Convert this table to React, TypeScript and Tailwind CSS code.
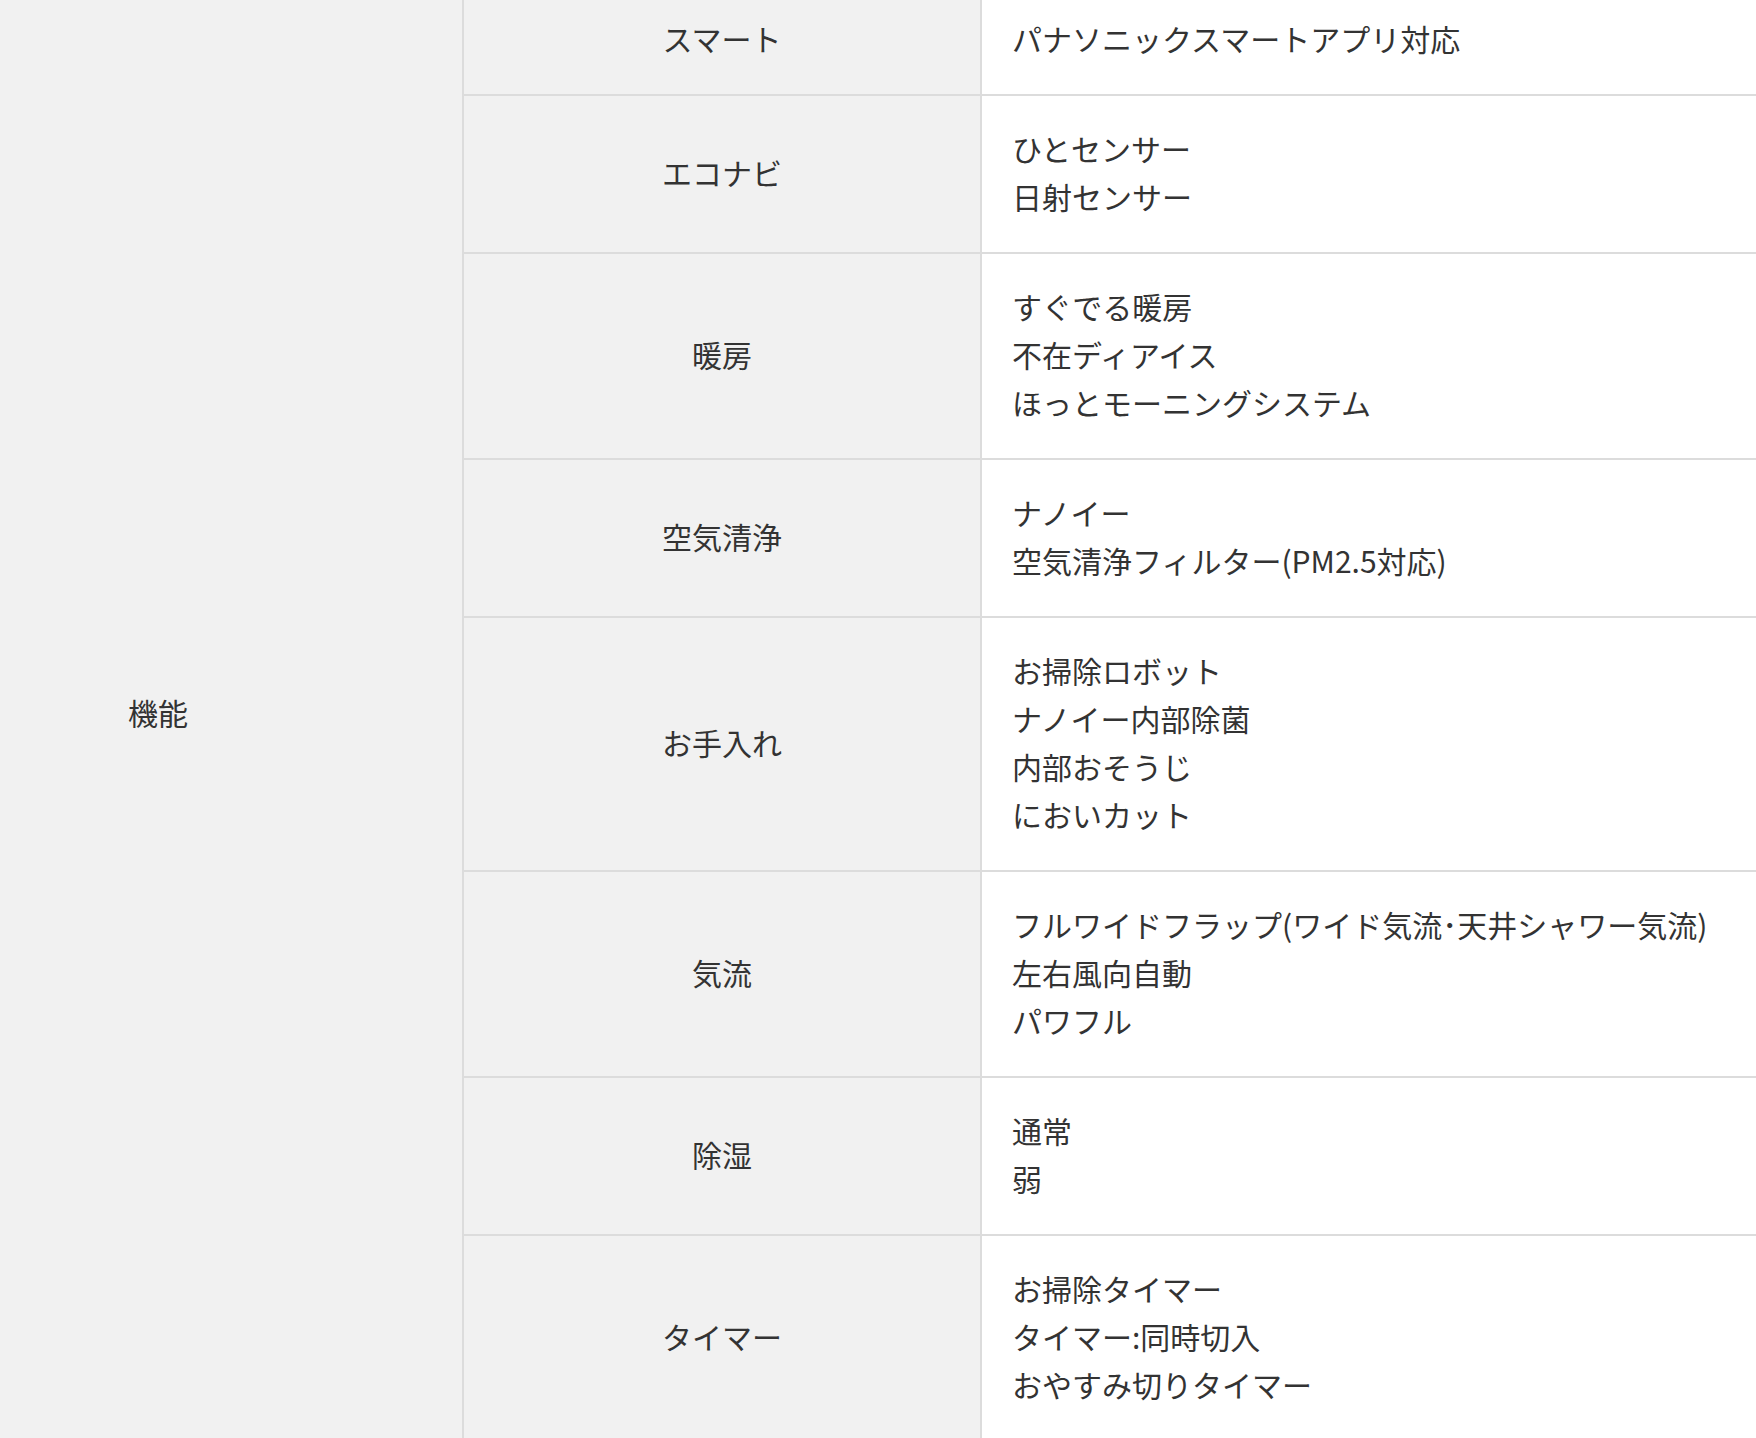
import React from "react";

type Row = { label: string; items: string[] };

const rows: Row[] = [
	{ label: "スマート", items: ["パナソニックスマートアプリ対応"] },
	{ label: "エコナビ", items: ["ひとセンサー", "日射センサー"] },
	{
		label: "暖房",
		items: ["すぐでる暖房", "不在ディアイス", "ほっとモーニングシステム"],
	},
	{ label: "空気清浄", items: ["ナノイー", "空気清浄フィルター(PM2.5対応)"] },
	{
		label: "お手入れ",
		items: ["お掃除ロボット", "ナノイー内部除菌", "内部おそうじ", "においカット"],
	},
	{
		label: "気流",
		items: [
			"フルワイドフラップ(ワイド気流･天井シャワー気流)",
			"左右風向自動",
			"パワフル",
		],
	},
	{ label: "除湿", items: ["通常", "弱"] },
	{
		label: "タイマー",
		items: ["お掃除タイマー", "タイマー:同時切入", "おやすみ切りタイマー"],
	},
];

export default function App() {
	return (
		<div
			className="h-[1438px] w-full overflow-hidden bg-white text-[30px] leading-[48px] text-[#333333]"
			style={{ fontFamily: '"Noto Sans CJK JP", "Noto Sans", sans-serif' }}
		>
			<div className="-mt-[14px] flex">
				{/* rowspan cell */}
				<div className="flex w-[464px] shrink-0 items-center border-r-2 border-[#dcdcdc] bg-[#f1f1f1] pb-[4px] pl-[128px]">
					機能
				</div>

				<div className="flex flex-1 flex-col">
					{rows.map((r) => (
						<div
							key={r.label}
							className="flex border-b-2 border-[#dcdcdc]"
						>
							<div className="flex w-[518px] shrink-0 items-center justify-center border-r-2 border-[#dcdcdc] bg-[#f1f1f1] pb-[4px]">
								{r.label}
							</div>
							<div className="flex-1 pb-[32px] pl-[30px] pt-[28px]">
								{r.items.map((t) => (
									<div key={t}>{t}</div>
								))}
							</div>
						</div>
					))}
				</div>
			</div>
		</div>
	);
}
